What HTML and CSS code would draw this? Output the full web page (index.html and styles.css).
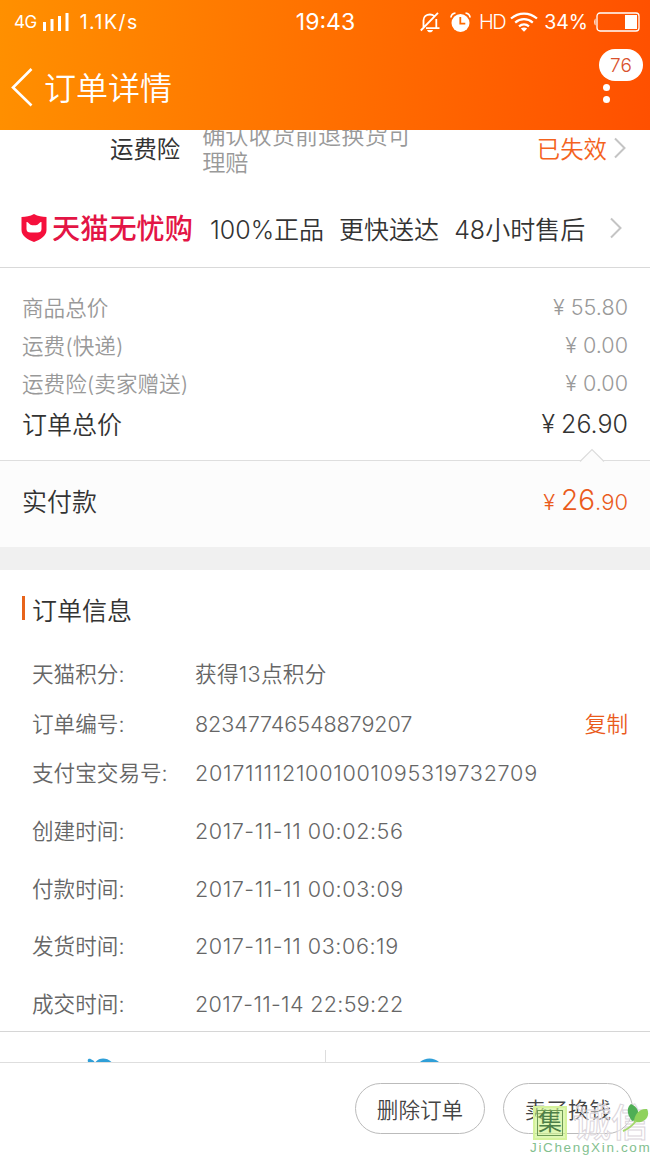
FILE: index.html
```
<!DOCTYPE html>
<html lang="zh-CN">
<head>
    <meta charset="UTF-8">
    <meta name="viewport" content="width=device-width, initial-scale=1.0">
    <title>订单详情</title>
    <link rel="stylesheet" href="styles.css">
</head>
<body>
    <div class="phone">
        <header class="header">
            <div class="status">
                <div class="status-left">
                    <span class="network">4G</span>
                    <svg class="signal" width="26" height="18" viewBox="0 0 26 18" fill="#fff">
                        <rect x="0" y="9" width="3" height="9"/>
                        <rect x="7.5" y="6" width="3" height="12"/>
                        <rect x="15" y="3" width="3" height="15"/>
                        <rect x="22.5" y="0" width="3" height="18"/>
                    </svg>
                    <span class="speed">1.1K/s</span>
                </div>
                <div class="clock">19:43</div>
                <div class="status-right">
                    <svg class="mute" width="20" height="21" viewBox="0 0 20 21" fill="none" stroke="#fff" stroke-width="1.8">
                        <path d="M3.5 15V8.5C3.5 4.5 6.5 2.5 10 2.5c1.500 0 3 .4 4 1.300M16.300 7v8.500M6 16.200H19.500M.8 18.500 18 .8"/>
                        <path d="M7 18h6c-.5 1.600-1.500 2.300-3 2.300S7.500 19.600 7 18z" fill="#fff" stroke="none"/>
                    </svg>
                    <svg class="alarm" width="21" height="21" viewBox="0 0 21 21">
                        <circle cx="10.500" cy="11" r="9" fill="#fff"/>
                        <path d="M.9 5.500C1.200 3 3 1.300 5.500 1M15.500 1c2.500.3 4.300 2 4.600 4.500" fill="none" stroke="#fff" stroke-width="1.700"/>
                        <path d="M10.300 5v6.700h5" fill="none" stroke="#ff6a00" stroke-width="1.800"/>
                    </svg>
                    <span class="hd">HD</span>
                    <svg class="wifi" width="28" height="20" viewBox="0 0 28 20" fill="none" stroke="#fff" stroke-width="2.200">
                        <path d="M1 6.500c7.500-6.600 18.500-6.600 26 0M5.200 10.600c5.200-4.600 12.400-4.600 17.600 0M9 14.400c3-2.600 7-2.600 10 0"/>
                        <path d="M10.800 16.500c2-1.500 4.400-1.500 6.400 0L14 19.800z" fill="#fff" stroke="none"/>
                    </svg>
                    <span class="percent">34%</span>
                    <svg class="battery" width="47" height="20" viewBox="0 0 47 20">
                        <path d="M2.500 6.500C.8 7.500.8 12.500 2.500 13.500z" fill="#fff"/>
                        <rect x="4" y="1" width="42" height="18" rx="3" fill="none" stroke="#fff" stroke-width="1.300"/>
                        <rect x="32" y="3" width="12" height="14" fill="#fff"/>
                    </svg>
                </div>
            </div>
            <div class="nav">
                <svg class="back" width="22" height="40" viewBox="0 0 22 40" fill="none" stroke="#fff" stroke-width="2.600">
                    <path d="M20.500 2 2 20.500 20.500 38.500"/>
                </svg>
                <h1 class="title">订单详情</h1>
                <div class="more">
                    <i class="dot"></i>
                    <i class="dot"></i>
                    <span class="badge">76</span>
                </div>
            </div>
        </header>

        <main class="content">
            <section class="services">
                <div class="insurance">
                    <span class="insurance-name">运费险</span>
                    <p class="insurance-desc">确认收货前退换货可理赔</p>
                    <span class="insurance-state">已失效</span>
                    <svg class="arrow" width="12" height="22" viewBox="0 0 12 22" fill="none" stroke="#c4c4c4" stroke-width="2">
                        <path d="M1 1.500 10.500 11 1 20.500"/>
                    </svg>
                </div>
                <div class="tmall">
                    <svg class="shield" width="26" height="28" viewBox="0 0 26 28">
                        <path d="M13 0C9 2.200 5 3 .5 3v13c0 6 6 9.500 12.500 12 6.500-2.500 12.500-6 12.500-12V3C21 3 17 2.200 13 0z" fill="#f5103c"/>
                        <path d="M5.500 8c2 0 2.700 2.200 4 2.800 2 .7 5 .7 7 0 1.300-.6 2-2.800 4-2.800v7c0 2.500-1.500 3.500-4 3.500h-7c-2.500 0-4-1-4-3.500z" fill="#fff"/>
                    </svg>
                    <strong class="tmall-name">天猫无忧购</strong>
                    <span class="promise">100%正品</span>
                    <span class="promise">更快送达</span>
                    <span class="promise">48小时售后</span>
                    <svg class="arrow" width="12" height="22" viewBox="0 0 12 22" fill="none" stroke="#c4c4c4" stroke-width="2">
                        <path d="M1 1.500 10.500 11 1 20.500"/>
                    </svg>
                </div>
            </section>

            <section class="amounts">
                <div class="amount"><span>商品总价</span><span class="price"><i class="yen">¥</i>55.80</span></div>
                <div class="amount"><span>运费(快递)</span><span class="price"><i class="yen">¥</i>0.00</span></div>
                <div class="amount"><span>运费险(卖家赠送)</span><span class="price"><i class="yen">¥</i>0.00</span></div>
                <div class="amount total"><span>订单总价</span><span class="price"><i class="yen">¥</i>26.90</span></div>
            </section>

            <section class="paid">
                <svg class="notch" width="26" height="14" viewBox="0 0 26 14">
                    <path d="M1 13.500 13 1.500 25 13.500" fill="#fcfcfc" stroke="#dcdcdc" stroke-width="1.200"/>
                </svg>
                <span>实付款</span>
                <span class="paid-price"><i class="yen">¥</i><b class="paid-int">26</b>.90</span>
            </section>

            <section class="info">
                <h2 class="info-title">订单信息</h2>
                <dl class="info-list">
                    <div class="info-row"><dt>天猫积分:</dt><dd class="points">获得13点积分</dd></div>
                    <div class="info-row"><dt>订单编号:</dt><dd class="order-no">82347746548879207</dd><a class="copy">复制</a></div>
                    <div class="info-row"><dt>支付宝交易号:</dt><dd class="trade-no">2017111121001001095319732709</dd></div>
                    <div class="info-row time"><dt>创建时间:</dt><dd>2017-11-11 00:02:56</dd></div>
                    <div class="info-row time"><dt>付款时间:</dt><dd>2017-11-11 00:03:09</dd></div>
                    <div class="info-row time"><dt>发货时间:</dt><dd>2017-11-11 03:06:19</dd></div>
                    <div class="info-row time"><dt>成交时间:</dt><dd class="deal">2017-11-14 22:59:22</dd></div>
                </dl>
            </section>

            <section class="contact">
                <div class="contact-item">
                    <svg width="26" height="4" viewBox="0 0 26 4" fill="#2f9fd8">
                        <path d="M1 4C0 1 2 .3 4 1.200S7 3 7.500 4zM8.500 4c4-4.600 11-4.600 16 0z"/>
                    </svg>
                </div>
                <div class="contact-item">
                    <svg width="20" height="4" viewBox="0 0 20 4" fill="#2f9fd8">
                        <path d="M0 4c5-4.800 14-4.800 19 0z"/>
                    </svg>
                </div>
            </section>
        </main>

        <footer class="footer">
            <button class="btn">删除订单</button>
            <button class="btn">卖了换钱</button>
            <div class="watermark">
                <div class="mark-top">
                    <span class="mark-box">集</span>
                    <span class="mark-name">诚信</span>
                    <svg class="leaf" width="28" height="28" viewBox="0 0 28 28">
                        <path d="M10 17C4 9 5 3 9 0c7 3 9 9 6 16z" fill="#4fae55"/>
                        <path d="M12 18C12 10 18 4 25 5c4 8-3 15-13 13z" fill="#8fd25c"/>
                        <path d="M14 17C10 22 6 25 1 27" fill="none" stroke="#a5d86e" stroke-width="2"/>
                    </svg>
                </div>
                <div class="mark-url">JiChengXin.com</div>
            </div>
        </footer>
    </div>
</body>
</html>
```
FILE: styles.css
```
* {
    box-sizing: border-box;
}
body {
    margin: 0;
    background: #fff;
    color: #333;
    font-family: Inter, "Noto Sans CJK SC", sans-serif;
    font-weight: 350;
}
h1, h2, p, dl, dd {
    margin: 0;
    font-weight: inherit;
}
i {
    font-style: normal;
}
svg {
    display: block;
    flex: none;
}
.phone {
    width: 650px;
    height: 1155px;
    display: flex;
    flex-direction: column;
    overflow: hidden;
    white-space: nowrap;
}

/* header */
.header {
    flex: none;
    height: 130px;
    color: #fff;
    background: linear-gradient(95deg, #ff9000, #ff5000);
}
.status {
    display: grid;
    grid-template-columns: 1fr auto 1fr;
    align-items: center;
    height: 44px;
    padding: 0 10px 0 14px;
    font-size: 20px;
    font-weight: 400;
}
.status-left, .status-right {
    display: flex;
    align-items: center;
}
.status-right {
    justify-content: flex-end;
}
.network {
    font-size: 17px;
    letter-spacing: -0.5px;
}
.signal {
    margin: 0 11px 0 6px;
}
.speed {
    font-size: 19.5px;
    letter-spacing: 1.5px;
}
.clock {
    padding-right: 3px;
    font-size: 23px;
}
.alarm {
    margin: 0 8px 0 10px;
}
.hd {
    font-size: 20px;
    font-weight: 300;
    letter-spacing: -1.5px;
}
.wifi {
    margin: 0 6px 0 5px;
}
.percent {
    font-size: 19.5px;
}
.battery {
    margin-left: 5px;
}
.nav {
    display: flex;
    align-items: center;
    height: 86px;
    padding: 0 37px 0 11px;
}
.title {
    margin: 0 0 2px 11px;
    font-size: 32px;
}
.more {
    position: relative;
    display: flex;
    flex-direction: column;
    gap: 5px;
    margin: 12px 3px 0 auto;
}
.dot {
    width: 7px;
    height: 7px;
    border-radius: 50%;
    background: #fff;
}
.badge {
    position: absolute;
    left: -4px;
    bottom: 22px;
    width: 44px;
    height: 32px;
    border-radius: 16px;
    background: #fff;
    color: #d9512c;
    font-size: 19px;
    line-height: 33px;
    text-align: center;
}

/* services */
.content {
    flex: 1;
    min-height: 0;
    overflow: hidden;
}
.services {
    height: 138px;
    border-bottom: 1px solid #d9d9d9;
}
.insurance {
    display: flex;
    align-items: center;
    height: 38px;
    padding: 0 24px 0 110px;
}
.insurance-name, .insurance-state {
    margin-bottom: 3px;
    font-size: 23.4px;
    font-weight: 400;
}
.insurance-desc {
    width: 212px;
    margin: 2px 0 0 22px;
    color: #999;
    font-size: 23.2px;
    line-height: 27px;
    white-space: normal;
}
.insurance-state {
    margin-left: auto;
    color: #f4631e;
    font-weight: 350;
}
.insurance .arrow {
    margin: 0 0 3px 7px;
}
.tmall {
    display: flex;
    align-items: center;
    height: 76px;
    margin-top: 22px;
    padding: 0 28px 0 21px;
}
.tmall-name {
    margin: 0 17px 3px 5px;
    color: #e31545;
    font-size: 28.2px;
    font-weight: 500;
}
.promise {
    margin-right: 15px;
    font-size: 25px;
}
.tmall .arrow {
    margin-left: auto;
}

/* amounts */
.amounts {
    height: 193px;
    padding: 19px 22px 0;
    border-bottom: 1px solid #dedede;
}
.amount {
    display: flex;
    justify-content: space-between;
    align-items: center;
    height: 38px;
    color: #999;
    font-size: 21.6px;
}
.total {
    height: 43px;
    color: #333;
    font-size: 25px;
}
.price {
    padding-top: 2px;
}
.yen {
    margin-right: 5px;
    letter-spacing: 1px;
}
.paid {
    position: relative;
    display: flex;
    justify-content: space-between;
    align-items: center;
    height: 109px;
    padding: 0 22px 8px;
    background: #fcfcfc;
    border-bottom: 23px solid #f0f0f0;
    font-size: 25px;
}
.notch {
    position: absolute;
    top: -13px;
    right: 45px;
}
.paid-price {
    color: #ea5b1c;
    font-size: 22px;
}
.paid-int {
    font-size: 28px;
    font-weight: 350;
}

/* order info */
.info {
    height: 462px;
    padding: 19px 22px 0;
    border-bottom: 1px solid #d6d6d6;
}
.info-title {
    display: flex;
    align-items: center;
    gap: 7px;
    height: 40px;
    font-size: 25px;
}
.info-title::before {
    content: "";
    width: 3px;
    height: 24px;
    margin-bottom: 2px;
    background: #e8641b;
}
.info-list {
    padding: 19px 0 0 10px;
    color: #666;
    font-size: 21.6px;
}
.info-row {
    display: flex;
    align-items: center;
    height: 49.5px;
}
.info-row dt {
    width: 163px;
}
.info-row .points {
    letter-spacing: 0.3px;
}
.info-row .order-no {
    padding-top: 3px;
    letter-spacing: -0.1px;
}
.info-row .trade-no {
    padding-top: 2px;
    letter-spacing: 0.72px;
}
.time {
    position: relative;
    top: 4px;
    height: 57.8px;
}
.time dd {
    padding-top: 3px;
    letter-spacing: 0.55px;
}
.time .deal {
    letter-spacing: 0.3px;
}
.copy {
    margin-left: auto;
    color: #ea5b1c;
}
.contact {
    display: flex;
    align-items: flex-end;
    height: 30px;
}
.contact-item {
    width: 325px;
    display: flex;
    align-items: flex-end;
    height: 12px;
    padding-left: 87px;
}
.contact-item + .contact-item {
    padding-left: 94px;
    border-left: 1px solid #ddd;
}

/* footer */
.footer {
    position: relative;
    flex: none;
    display: flex;
    justify-content: flex-end;
    gap: 18px;
    height: 93px;
    padding: 20px 17px 0;
    border-top: 1px solid #dedede;
}
.btn {
    width: 130px;
    height: 51px;
    padding: 0;
    border: 1px solid #bbb;
    border-radius: 26px;
    background: #fff;
    color: #444;
    font: inherit;
    font-size: 21.6px;
}
.watermark {
    position: absolute;
    left: 530px;
    top: 41px;
}
.mark-top {
    display: flex;
    align-items: center;
    height: 37px;
}
.mark-box {
    width: 34px;
    height: 34px;
    margin-left: 3px;
    border: 2px solid #d5f29b;
    outline: 1px solid #6d9a55;
    outline-offset: -5px;
    background: rgba(205, 242, 140, 0.65);
    color: #4d7e48;
    font-size: 24px;
    font-weight: 400;
    line-height: 28px;
    text-align: center;
}
.mark-name {
    margin-left: 6px;
    color: rgba(255, 255, 255, 0.45);
    font-size: 38px;
    font-weight: 500;
    line-height: 37px;
    -webkit-text-stroke: 1px #dcd6dc;
}
.leaf {
    margin: -10px 0 0 -27px;
}
.mark-url {
    margin-top: -1px;
    color: #84bf8f;
    font-family: "Liberation Sans", sans-serif;
    font-size: 13.5px;
    line-height: 15px;
    letter-spacing: 1.65px;
}
```
